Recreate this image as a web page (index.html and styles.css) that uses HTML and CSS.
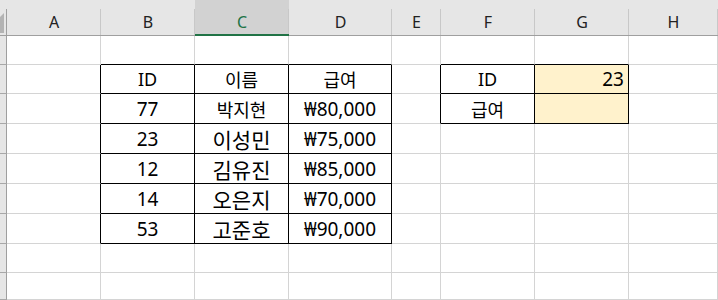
FILE: index.html
```html
<!DOCTYPE html>
<html lang="ko">
<head>
    <meta charset="UTF-8">
    <title>급여 조회</title>
    <link rel="stylesheet" href="styles.css">
</head>
<body>
    <div class="sheet">
        <!-- column headers -->
        <div class="corner"><svg width="6" height="36" viewBox="0 0 6 36"><polygon points="0,17 4,13 4,33 0,33" fill="#b3b3b3"/></svg></div>
        <div class="hd">A</div>
        <div class="hd">B</div>
        <div class="hd hd-sel">C</div>
        <div class="hd">D</div>
        <div class="hd">E</div>
        <div class="hd">F</div>
        <div class="hd">G</div>
        <div class="hd">H</div>

        <!-- row 1 -->
        <div class="rh"></div>
        <div class="c"></div>
        <div class="c top"></div>
        <div class="c top"></div>
        <div class="c top"></div>
        <div class="c"></div>
        <div class="c top"></div>
        <div class="c top"></div>
        <div class="c"></div>

        <!-- row 2 -->
        <div class="rh"></div>
        <div class="c left"></div>
        <div class="c box">ID</div>
        <div class="c box">이름</div>
        <div class="c box">급여</div>
        <div class="c left"></div>
        <div class="c box">ID</div>
        <div class="c box fill right num">23</div>
        <div class="c"></div>

        <!-- row 3 -->
        <div class="rh"></div>
        <div class="c left"></div>
        <div class="c box num">77</div>
        <div class="c box">박지현</div>
        <div class="c box num">₩80,000</div>
        <div class="c left"></div>
        <div class="c box">급여</div>
        <div class="c box fill"></div>
        <div class="c"></div>

        <!-- row 4 -->
        <div class="rh"></div>
        <div class="c left"></div>
        <div class="c box num">23</div>
        <div class="c box name">이성민</div>
        <div class="c box num">₩75,000</div>
        <div class="c"></div>
        <div class="c"></div>
        <div class="c"></div>
        <div class="c"></div>

        <!-- row 5 -->
        <div class="rh"></div>
        <div class="c left"></div>
        <div class="c box num">12</div>
        <div class="c box name">김유진</div>
        <div class="c box num">₩85,000</div>
        <div class="c"></div>
        <div class="c"></div>
        <div class="c"></div>
        <div class="c"></div>

        <!-- row 6 -->
        <div class="rh"></div>
        <div class="c left"></div>
        <div class="c box num">14</div>
        <div class="c box name">오은지</div>
        <div class="c box num">₩70,000</div>
        <div class="c"></div>
        <div class="c"></div>
        <div class="c"></div>
        <div class="c"></div>

        <!-- row 7 -->
        <div class="rh"></div>
        <div class="c left"></div>
        <div class="c box num">53</div>
        <div class="c box name">고준호</div>
        <div class="c box num">₩90,000</div>
        <div class="c"></div>
        <div class="c"></div>
        <div class="c"></div>
        <div class="c"></div>

        <!-- rows 8-9 -->
        <div class="rh"></div>
        <div class="c"></div>
        <div class="c"></div>
        <div class="c"></div>
        <div class="c"></div>
        <div class="c"></div>
        <div class="c"></div>
        <div class="c"></div>
        <div class="c"></div>

        <div class="rh"></div>
        <div class="c"></div>
        <div class="c"></div>
        <div class="c"></div>
        <div class="c"></div>
        <div class="c"></div>
        <div class="c"></div>
        <div class="c"></div>
        <div class="c"></div>
    </div>
</body>
</html>
```

FILE: styles.css
```css
html, body {
    margin: 0;
    padding: 0;
    background: #fff;
}
body {
    font-family: "Noto Sans", "Noto Sans CJK KR", sans-serif;
    color: #000;
    width: 718px;
    height: 300px;
    overflow: hidden;
}
.sheet {
    display: grid;
    grid-template-columns: 7px 94px 94px 94px 103px 49px 94px 94px 1fr;
    grid-template-rows: 36px 29px 29px 30px 30px 30px 30px 30px 29px 1fr;
    height: 300px;
}
.sheet > div {
    box-sizing: border-box;
}

/* headers */
.corner {
    background: linear-gradient(#9f9f9f, #9f9f9f) right 9px / 1px 100% no-repeat, #e6e6e6;
    border-bottom: 1px solid #9f9f9f;
}
.corner svg {
    display: block;
}
.hd {
    background: linear-gradient(#c8c8c8, #c8c8c8) right 9px / 1px 100% no-repeat, #e6e6e6;
    border-bottom: 1px solid #9f9f9f;
    display: flex;
    align-items: center;
    justify-content: center;
    padding-top: 9px;
    font-size: 16px;
    color: #222;
}
.hd-sel {
    background: linear-gradient(#c8c8c8, #c8c8c8) right 9px / 1px 100% no-repeat, #d2d2d2;
    border-bottom: 2px solid #217346;
    color: #217346;
}
.rh {
    background: #e6e6e6;
    border-right: 1px solid #9f9f9f;
    border-bottom: 1px solid #a8a8a8;
}

/* cells */
.c {
    border-right: 1px solid #d4d4d4;
    border-bottom: 1px solid #d4d4d4;
    display: flex;
    align-items: center;
    justify-content: center;
    font-size: 18px;
    white-space: nowrap;
}
.c.top {
    border-bottom-color: #000;
}
.c.left {
    border-right-color: #000;
}
.c.box {
    border-right-color: #000;
    border-bottom-color: #000;
}
.c.num {
    font-size: 19px;
}
.c.name {
    font-size: 21px;
}
.c.fill {
    background: #fff2cc;
}
.c.right {
    justify-content: flex-end;
    padding-right: 4px;
}
```
